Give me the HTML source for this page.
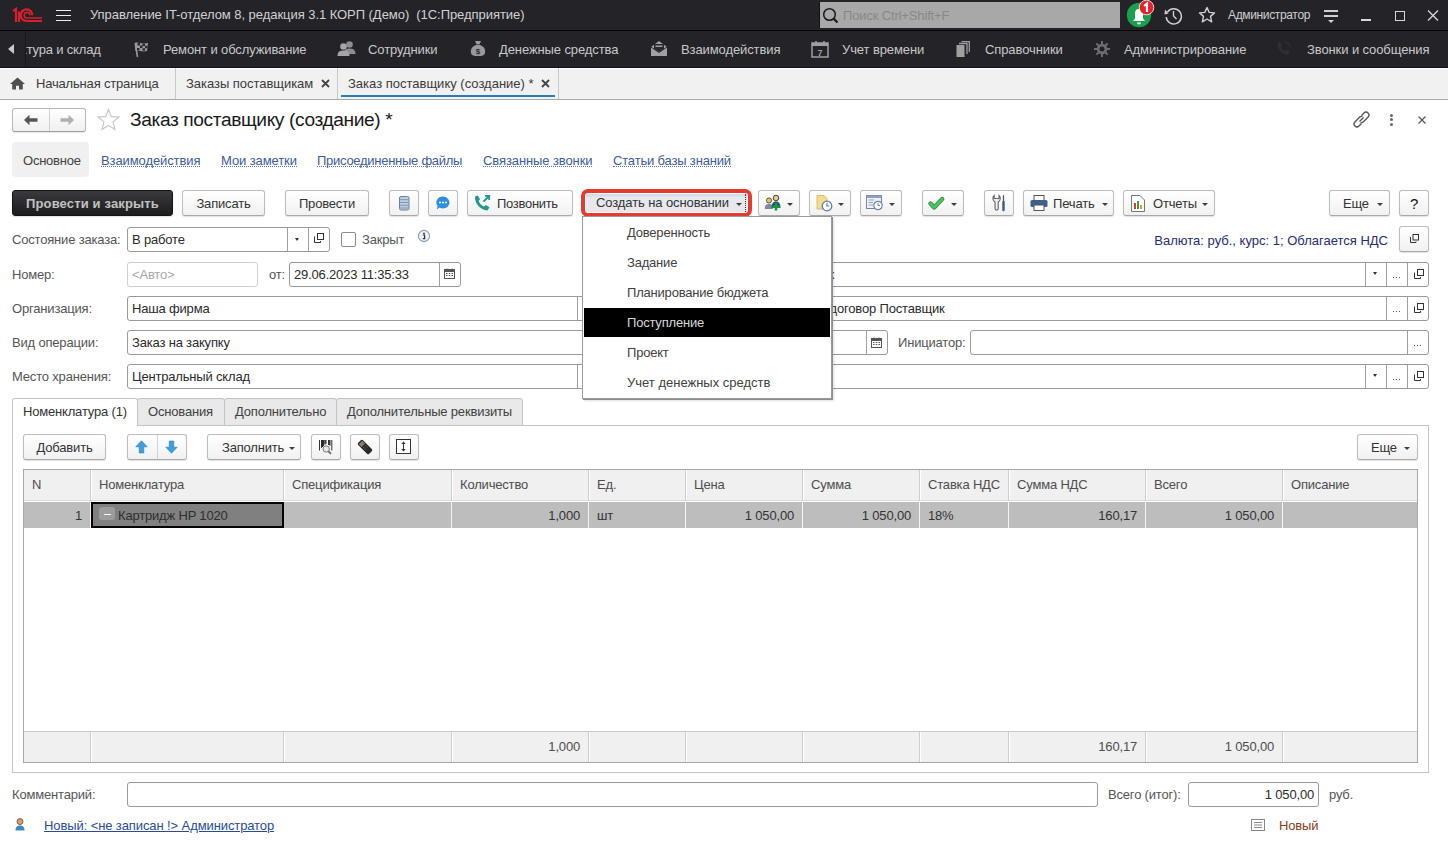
<!DOCTYPE html>
<html><head><meta charset="utf-8">
<style>
*{box-sizing:border-box}
html,body{margin:0;padding:0}
body{width:1448px;height:847px;overflow:hidden;position:relative;background:#fff;font-family:"Liberation Sans",sans-serif;font-size:13px;color:#4d4d4d;letter-spacing:-0.18px}
.a{position:absolute;white-space:nowrap}
.t{position:absolute;white-space:nowrap;line-height:16px}
/* top bars */
#tb{position:absolute;left:0;top:0;width:1448px;height:30px;background:#232328}
#tbl{position:absolute;left:0;top:30px;width:1448px;height:1px;background:#050505}
#sb{position:absolute;left:0;top:31px;width:1448px;height:37px;background:#232328;border-bottom:1px solid #111}
#tabs{position:absolute;left:0;top:68px;width:1448px;height:32px;background:#f1f1f1;border-top:1px solid #fff;border-bottom:1px solid #a8a8a8}
.wt{color:#c9c9c9}
.btn{position:absolute;height:26px;padding-top:1px;border:1px solid #bcbcbc;border-bottom-color:#a8a8a8;border-radius:3px;background:linear-gradient(#ffffff,#f1f1f1);box-shadow:0 1px 1px rgba(0,0,0,.12);color:#333;line-height:24px;text-align:center;white-space:nowrap}
.fld{position:absolute;height:24px;border:1px solid #9a9a9a;border-radius:3px;background:#fff;color:#2a2a2a;line-height:22px;padding-left:4px;padding-top:1px;white-space:nowrap;overflow:hidden}
.dv{position:absolute;top:0;bottom:0;width:1px;background:#a0a0a0}
.lbl{position:absolute;white-space:nowrap;color:#555;line-height:16px}
.dd{position:absolute;width:0;height:0;border-left:3px solid transparent;border-right:3px solid transparent;border-top:3px solid #404040}
.lnk{position:absolute;white-space:nowrap;color:#3d5a9e;line-height:16px;height:14px;border-bottom:1px dotted #5a78b8}
</style></head>
<body>
<div id="tb"></div>
<div id="tbl"></div>
<div id="sb"></div>
<div id="tabs"></div>

<!-- title bar content -->
<svg class="a" style="left:11px;top:7px" width="34" height="17" viewBox="0 0 34 17">
 <path d="M2 4 L5 2 L5 15" stroke="#d8202c" stroke-width="2.2" fill="none"/>
 <path d="M8 4.5 L8 15" stroke="#d8202c" stroke-width="2.2" fill="none"/>
 <path d="M31 14 H15.5 A5.8 5.8 0 1 1 21.3 8.2" stroke="#d8202c" stroke-width="2.2" fill="none"/>
 <path d="M31 11 H16 A2.8 2.8 0 1 1 18.8 8.2" stroke="#d8202c" stroke-width="1.6" fill="none"/>
</svg>
<div class="a" style="left:56px;top:10px;width:15px;height:1px;background:#ececec"></div>
<div class="a" style="left:56px;top:15px;width:15px;height:1px;background:#ececec"></div>
<div class="a" style="left:56px;top:20px;width:15px;height:1px;background:#ececec"></div>
<div class="t" style="left:90px;top:7px;color:#d2d2d2;letter-spacing:-0.05px">Управление IT-отделом 8, редакция 3.1 КОРП (Демо) &nbsp;(1С:Предприятие)</div>
<div class="a" style="left:819px;top:2px;width:301px;height:26px;background:#a8a8a8;border-left:1px solid #111"></div>
<svg class="a" style="left:822px;top:7px" width="18" height="18" viewBox="0 0 18 18"><circle cx="7.5" cy="7.5" r="5.8" stroke="#1a1a1a" stroke-width="1.5" fill="none"/><path d="M11.6 11.6 L15.5 15.5" stroke="#1a1a1a" stroke-width="2.2"/></svg>
<div class="t" style="left:843px;top:8px;color:#888888;font-size:13px;letter-spacing:-0.15px">Поиск Ctrl+Shift+F</div>
<!-- bell -->
<svg class="a" style="left:1125px;top:0px" width="32" height="30" viewBox="0 0 32 30">
 <circle cx="14" cy="15" r="12.2" fill="#17a14a"/>
 <path d="M8 21 L10 18.5 V13 A4 4 0 0 1 18 13 V18.5 L20 21 Z" fill="#fff"/>
 <path d="M12 22.5 A2 2 0 0 0 16 22.5 Z" fill="#fff"/>
 <circle cx="21.5" cy="7.5" r="7.3" fill="#e8202a" stroke="#fff" stroke-width="0.8"/>
 <path d="M19.2 6 L22 3.6 V12" stroke="#fff" stroke-width="2.2" fill="none"/>
</svg>
<svg class="a" style="left:1163px;top:6px" width="20" height="19" viewBox="0 0 20 19">
 <path d="M4.5 6 A7.6 7.6 0 1 1 3.2 11" stroke="#d0d0d0" stroke-width="1.5" fill="none"/>
 <path d="M2 3.5 L5.5 7.5 L1.5 8.5 Z" fill="#d0d0d0"/>
 <path d="M10.5 5 V10 L13.5 13" stroke="#d0d0d0" stroke-width="1.4" fill="none"/>
</svg>
<svg class="a" style="left:1198px;top:6px" width="18" height="18" viewBox="0 0 18 18">
 <path d="M9 1.5 L11.2 6.4 L16.5 6.9 L12.5 10.4 L13.7 15.8 L9 13 L4.3 15.8 L5.5 10.4 L1.5 6.9 L6.8 6.4 Z" stroke="#d0d0d0" stroke-width="1.4" fill="none" stroke-linejoin="round"/>
</svg>
<div class="t" style="left:1228px;top:7px;color:#d0d0d0;font-size:12px;letter-spacing:-0.35px">Администратор</div>
<div class="a" style="left:1324px;top:10px;width:14px;height:1.5px;background:#d0d0d0"></div>
<div class="a" style="left:1324px;top:15px;width:14px;height:1.5px;background:#d0d0d0"></div>
<div class="dd" style="left:1328px;top:20px;border-left-width:3px;border-right-width:3px;border-top:3px solid #d0d0d0"></div>
<div class="a" style="left:1361px;top:19px;width:10px;height:1.5px;background:#d8d8d8"></div>
<div class="a" style="left:1395px;top:11px;width:10px;height:10px;border:1.5px solid #d8d8d8"></div>
<svg class="a" style="left:1427px;top:10px" width="12" height="11" viewBox="0 0 12 11"><path d="M1 0.5 L11 10.5 M11 0.5 L1 10.5" stroke="#d8d8d8" stroke-width="1.3"/></svg>

<!-- section bar -->
<div class="a" style="left:25px;top:31px;width:1px;height:36px;background:#18181b"></div>
<div class="a" style="left:8px;top:44px;width:0;height:0;border-top:5px solid transparent;border-bottom:5px solid transparent;border-right:6px solid #c9c9c9"></div>
<div class="a" style="left:26px;top:42px;width:80px;height:18px;overflow:hidden"><div class="t wt" style="left:-5px;top:0">ктура и склад</div></div>


<!-- flag -->
<svg class="a" style="left:133px;top:41px" width="17" height="17" viewBox="0 0 17 17">
 <path d="M2 2 C5 0.5 8 3.5 15 2 L14 10 C8 11.5 5 8.5 2.5 10 Z" fill="#9a9a9a"/>
 <path d="M4.5 2 h2.5 v2.5 h-2.5z M9.5 2.5 h2.5 v2.5 h-2.5z M7 4.5 h2.5 v2.5 h-2.5z M12 4.8 h2.5 v2.5 h-2.5z M4 7 h2.5 v2.5 h-2.5z M9.5 7.2 h2.5 v2.5 h-2.5z" fill="#2a2a2e"/>
 <path d="M2.2 2 L4.5 16" stroke="#9a9a9a" stroke-width="1.6"/>
</svg>
<div class="t wt" style="left:163px;top:42px;letter-spacing:-0.12px">Ремонт и обслуживание</div>
<!-- people -->
<svg class="a" style="left:337px;top:40px" width="19" height="17" viewBox="0 0 19 17">
 <circle cx="12.5" cy="4.5" r="3.3" fill="#8e8e8e"/><path d="M7 14 C7 9.5 9.5 8.5 12.5 8.5 C15.5 8.5 18.5 9.5 18.5 14 Z" fill="#8e8e8e"/>
 <circle cx="6.5" cy="6.5" r="3.3" fill="#a5a5a5"/><path d="M0.5 16 C0.5 11.5 3 10.5 6.5 10.5 C10 10.5 12.5 11.5 12.5 16 Z" fill="#a5a5a5"/>
</svg>
<div class="t wt" style="left:368px;top:42px;letter-spacing:-0.1px">Сотрудники</div>
<!-- money bag -->
<svg class="a" style="left:470px;top:40px" width="16" height="17" viewBox="0 0 16 17">
 <path d="M5 1 H11 L9.5 4.5 H6.5 Z" fill="#999"/>
 <path d="M6 5 C1 7 0.5 10 1 13 C1.5 15.5 4 16 8 16 C12 16 14.5 15.5 15 13 C15.5 10 15 7 10 5 Z" fill="#999"/>
 <text x="8" y="13.5" font-size="8" text-anchor="middle" fill="#2a2a2e" font-family="Liberation Sans" font-weight="bold">$</text>
</svg>
<div class="t wt" style="left:499px;top:42px;letter-spacing:-0.1px">Денежные средства</div>
<!-- envelope -->
<svg class="a" style="left:650px;top:40px" width="18" height="17" viewBox="0 0 18 17">
 <path d="M1 7 L9 1 L17 7 V16 H1 Z" fill="#a0a0a0"/>
 <path d="M4 4 H14 V9 L9 12 L4 9 Z" fill="#2a2a2e"/>
 <path d="M5.5 5.5 H12.5 V7 H5.5Z" fill="#a0a0a0"/>
 <path d="M1 7 L9 12.5 L17 7" stroke="#2a2a2e" stroke-width="1" fill="none"/>
</svg>
<div class="t wt" style="left:681px;top:42px;letter-spacing:-0.1px">Взаимодействия</div>
<!-- calendar -->
<svg class="a" style="left:811px;top:40px" width="18" height="18" viewBox="0 0 18 18">
 <rect x="1" y="3" width="16" height="14" fill="none" stroke="#a0a0a0" stroke-width="1.5"/>
 <rect x="1" y="3" width="16" height="3" fill="#a0a0a0"/>
 <path d="M5 1 V4 M13 1 V4" stroke="#a0a0a0" stroke-width="1.5"/>
 <text x="9" y="15.5" font-size="9" text-anchor="middle" fill="#a0a0a0" font-family="Liberation Sans" font-weight="bold">7</text>
</svg>
<div class="t wt" style="left:842px;top:42px;letter-spacing:-0.1px">Учет времени</div>
<!-- books -->
<svg class="a" style="left:956px;top:41px" width="14" height="16" viewBox="0 0 14 16">
 <rect x="0.5" y="4" width="8" height="12" fill="#a0a0a0"/>
 <path d="M3 2.5 H11 V13" stroke="#a0a0a0" stroke-width="1.3" fill="none"/>
 <path d="M5.5 0.7 H13.3 V11" stroke="#a0a0a0" stroke-width="1.3" fill="none"/>
</svg>
<div class="t wt" style="left:985px;top:42px;letter-spacing:-0.1px">Справочники</div>
<!-- gear -->
<svg class="a" style="left:1094px;top:41px" width="16" height="16" viewBox="0 0 16 16">
 <g fill="#6e6e6e"><circle cx="8" cy="8" r="5.2"/>
 <path d="M7 0 h2 v3 h-2z M7 13 h2 v3 h-2z M0 7 h3 v2 h-3z M13 7 h3 v2 h-3z" />
 <path d="M7 0 h2 v3 h-2z M7 13 h2 v3 h-2z M0 7 h3 v2 h-3z M13 7 h3 v2 h-3z" transform="rotate(45 8 8)"/></g>
 <circle cx="8" cy="8" r="2.5" fill="#222227"/>
</svg>
<div class="t wt" style="left:1124px;top:42px;letter-spacing:-0.1px">Администрирование</div>
<svg class="a" style="left:1275px;top:40px" width="18" height="18" viewBox="0 0 18 18">
 <path d="M3 3 C2 8 6 14 13 15 L15 12 L11.5 10 L10 11.5 C8 10.5 6.5 9 5.5 7 L7 5.5 L5 2 Z" fill="#303035"/>
 <path d="M10 2 C13 2.5 15 4.5 15.5 7.5" stroke="#303035" stroke-width="1.3" fill="none"/>
</svg>
<div class="t wt" style="left:1307px;top:42px;letter-spacing:-0.1px">Звонки и сообщения</div>

<!-- open tabs -->
<svg class="a" style="left:10px;top:77px" width="15" height="13" viewBox="0 0 15 13">
 <path d="M7.5 0.5 L15 7 H12.8 V12.5 H9 V8.8 H6 V12.5 H2.2 V7 H0 Z" fill="#505050"/>
</svg>
<div class="t" style="left:36px;top:76px;color:#3a3a3a;letter-spacing:-0.18px">Начальная страница</div>
<div class="a" style="left:175px;top:68px;width:1px;height:31px;background:#c8c8c8"></div>
<div class="t" style="left:186px;top:76px;color:#3a3a3a;letter-spacing:-0.04px">Заказы поставщикам</div>
<svg class="a" style="left:321px;top:79px" width="9" height="9" viewBox="0 0 9 9"><path d="M1 1 L8 8 M8 1 L1 8" stroke="#444" stroke-width="1.8"/></svg>
<div class="a" style="left:337px;top:68px;width:1px;height:31px;background:#c8c8c8"></div>
<div class="t" style="left:348px;top:76px;color:#3a3a3a;letter-spacing:0px">Заказ поставщику (создание) *</div>
<svg class="a" style="left:541px;top:79px" width="9" height="9" viewBox="0 0 9 9"><path d="M1 1 L8 8 M8 1 L1 8" stroke="#444" stroke-width="1.8"/></svg>
<div class="a" style="left:341px;top:95px;width:214px;height:2px;background:#2b7bb5"></div>
<div class="a" style="left:558px;top:68px;width:1px;height:31px;background:#c8c8c8"></div>


<!-- form header -->
<div class="a" style="left:12px;top:108px;width:74px;height:24px;border:1px solid #b8b8b8;border-bottom-color:#a0a0a0;border-radius:3px;background:linear-gradient(#fff,#f0f0f0);box-shadow:0 1px 1px rgba(0,0,0,.1)"></div>
<div class="a" style="left:49px;top:109px;width:1px;height:22px;background:#d0d0d0"></div>
<svg class="a" style="left:23px;top:114px" width="16" height="12" viewBox="0 0 16 12"><path d="M1 6 L6.5 0.8 V4.3 H14.5 V7.7 H6.5 V11.2 Z" fill="#555"/></svg>
<svg class="a" style="left:59px;top:114px" width="16" height="12" viewBox="0 0 16 12"><path d="M15 6 L9.5 0.8 V4.3 H1.5 V7.7 H9.5 V11.2 Z" fill="#b0b0b0"/></svg>
<svg class="a" style="left:96px;top:108px" width="25" height="24" viewBox="0 0 25 24">
 <path d="M12.5 1.5 L15.3 8.6 L23 9 L17 13.9 L19 21.5 L12.5 17.3 L6 21.5 L8 13.9 L2 9 L9.7 8.6 Z" stroke="#c4c4c4" stroke-width="1.1" fill="none" stroke-linejoin="miter"/>
</svg>
<div class="t" style="left:130px;top:110px;font-size:19.2px;line-height:20px;color:#1a1a1a;letter-spacing:-0.4px">Заказ поставщику (создание) *</div>
<svg class="a" style="left:1352px;top:110px" width="19" height="19" viewBox="0 0 19 19">
 <path d="M9.5 5.5 L12 3 A2.9 2.9 0 0 1 16.1 7.1 L11.5 11.7 A2.9 2.9 0 0 1 8.6 12.5" stroke="#555" stroke-width="1.4" fill="none"/>
 <path d="M9.5 13.5 L7 16 A2.9 2.9 0 0 1 2.9 11.9 L7.5 7.3 A2.9 2.9 0 0 1 10.4 6.5" stroke="#555" stroke-width="1.4" fill="none"/>
 <path d="M7.5 11.5 L11.5 7.5" stroke="#555" stroke-width="1.4"/>
</svg>
<div class="a" style="left:1390px;top:113.5px;width:3px;height:3px;border-radius:50%;background:#666"></div>
<div class="a" style="left:1390px;top:118px;width:3px;height:3px;border-radius:50%;background:#666"></div>
<div class="a" style="left:1390px;top:122.5px;width:3px;height:3px;border-radius:50%;background:#666"></div>
<svg class="a" style="left:1417.5px;top:115.5px" width="8" height="8" viewBox="0 0 8 8"><path d="M0.5 0.5 L7.5 7.5 M7.5 0.5 L0.5 7.5" stroke="#555" stroke-width="1.2"/></svg>

<div class="a" style="left:12px;top:142px;width:77px;height:35px;border-radius:4px;background:#f0f0f0"></div>
<div class="t" style="left:23px;top:153px;color:#404040;letter-spacing:-0.23px">Основное</div>
<div class="lnk" style="left:101px;top:153px;letter-spacing:-0.1px">Взаимодействия</div>
<div class="lnk" style="left:221px;top:153px;letter-spacing:-0.1px">Мои заметки</div>
<div class="lnk" style="left:317px;top:153px;letter-spacing:-0.27px">Присоединенные файлы</div>
<div class="lnk" style="left:483px;top:153px;letter-spacing:-0.1px">Связанные звонки</div>
<div class="lnk" style="left:613px;top:153px;letter-spacing:-0.17px">Статьи базы знаний</div>

<!-- toolbar -->
<div class="btn" style="left:12px;top:190px;width:161px;background:linear-gradient(#3a3a3e,#1c1c1f);border-color:#141416;color:#c2c2c2;font-weight:bold;letter-spacing:0.15px">Провести и закрыть</div>
<div class="btn" style="left:182px;top:190px;width:83px">Записать</div>
<div class="btn" style="left:285px;top:190px;width:84px">Провести</div>
<div class="btn" style="left:389px;top:190px;width:30px"></div>
<svg class="a" style="left:399px;top:196px" width="11" height="15" viewBox="0 0 11 15">
 <rect x="0.5" y="0.5" width="9.5" height="13.5" rx="1.5" fill="#bcd0e6" stroke="#70809a"/>
 <path d="M1 3.7 H9.5 M1 6.5 H9.5 M1 9.3 H9.5 M1 12 H9.5" stroke="#7d8ca4" stroke-width="0.9"/>
</svg>
<div class="btn" style="left:428px;top:190px;width:30px"></div>
<svg class="a" style="left:435px;top:195px" width="16" height="16" viewBox="0 0 16 16">
 <path d="M8 1.5 A6.5 6 0 1 1 4.5 12.6 L1.8 14.5 L2.6 11 A6.5 6 0 0 1 8 1.5 Z" fill="#2d8fe0"/>
 <circle cx="5" cy="7.5" r="1" fill="#fff"/><circle cx="8" cy="7.5" r="1" fill="#fff"/><circle cx="11" cy="7.5" r="1" fill="#fff"/>
</svg>
<div class="btn" style="left:467px;top:190px;width:106px;text-align:left;padding-left:29px;letter-spacing:-0.3px">Позвонить</div>
<svg class="a" style="left:473px;top:194px" width="19" height="18" viewBox="0 0 19 18">
 <path d="M2 2.5 C1.5 9 7 16 14.5 16.5 L16.5 13.3 L12.8 11 L11 12.5 C8.5 11.5 6.5 9.5 5.5 7 L7 5.3 L4.8 1.5 Z" fill="#1f9a8a"/>
 <path d="M10.5 7.5 L16 2 M12 1.8 H16.2 V6" stroke="#1f9a8a" stroke-width="1.8" fill="none"/>
</svg>
<div class="a" style="left:581px;top:189px;width:171px;height:28px;border:4.5px solid #e63b2f;border-radius:7px"></div>
<div class="a" style="left:586px;top:194px;width:161px;height:18px;background:linear-gradient(#d6dde8 0,#d6dde8 2px,#e6e8ec 3px,#e8e8ea);"></div>
<div class="a" style="left:745px;top:194px;width:1px;height:18px;border-left:1px dotted #333"></div>
<div class="t" style="left:596px;top:195px;color:#333;letter-spacing:-0.1px">Создать на основании</div>
<div class="dd" style="left:736px;top:203px"></div>
<div class="btn" style="left:758px;top:190px;width:42px"></div>
<svg class="a" style="left:764px;top:194px" width="18" height="17" viewBox="0 0 18 17">
 <circle cx="5" cy="6.5" r="2.6" fill="#e3c26a" stroke="#403a20" stroke-width="0.8"/>
 <path d="M0.8 15 C0.8 11 2.5 10 5 10 C7.5 10 9 11 9 15 Z" fill="#7a8aa0"/>
 <circle cx="12" cy="4" r="2.8" fill="#e8c79a" stroke="#333" stroke-width="0.9"/>
 <path d="M7.5 14 C7.5 9 9.5 7.5 12 7.5 C14.5 7.5 16.5 9 16.5 14 Z" fill="#2e4a6e"/>
 <path d="M12 9 V16.5 M8.3 12.8 H15.7" stroke="#139a3c" stroke-width="2.6"/>
</svg>
<div class="dd" style="left:787px;top:203px"></div>
<div class="btn" style="left:809px;top:190px;width:42px"></div>
<svg class="a" style="left:816px;top:195px" width="17" height="17" viewBox="0 0 17 17">
 <path d="M1 0.5 H8 L11 3.5 V14 H1 Z" fill="#f3dc8e" stroke="#d2b45a" stroke-width="0.8"/>
 <circle cx="11" cy="11" r="4.8" fill="#fff" stroke="#5a7fb0" stroke-width="1.3"/>
 <path d="M11 8 V11 H13.3" stroke="#5a7fb0" stroke-width="1.1" fill="none"/>
</svg>
<div class="dd" style="left:838px;top:203px"></div>
<div class="btn" style="left:860px;top:190px;width:42px"></div>
<svg class="a" style="left:866px;top:195px" width="18" height="16" viewBox="0 0 18 16">
 <rect x="0.5" y="0.5" width="15" height="13" fill="#eef2f8" stroke="#6f84a6"/>
 <rect x="0.5" y="0.5" width="15" height="2.5" fill="#8fa3c2"/>
 <path d="M2.5 5 H8 M2.5 7.5 H7 M2.5 10 H7" stroke="#8fa3c2"/>
 <circle cx="12" cy="10.5" r="4.2" fill="#fff" stroke="#6f84a6" stroke-width="1.2"/>
 <path d="M12 8 V10.5 H14" stroke="#6f84a6" fill="none"/>
</svg>
<div class="dd" style="left:889px;top:203px"></div>
<div class="btn" style="left:922px;top:190px;width:42px"></div>
<svg class="a" style="left:928px;top:196px" width="17" height="15" viewBox="0 0 17 15"><path d="M2.5 7.5 L6.2 11.5 L14.2 3" stroke="#2e8a3e" stroke-width="4.2" fill="none" stroke-linecap="round" stroke-linejoin="round"/><path d="M2.5 7.5 L6.2 11.5 L14.2 3" stroke="#4cc45e" stroke-width="2.6" fill="none" stroke-linecap="round" stroke-linejoin="round"/></svg>
<div class="dd" style="left:951px;top:203px"></div>
<div class="btn" style="left:984px;top:190px;width:30px"></div>
<svg class="a" style="left:991px;top:194px" width="16" height="18" viewBox="0 0 16 18">
 <path d="M3.2 1.5 A4 4 0 0 0 4 8 V14.5 A1.6 1.6 0 0 0 7.2 14.5 V8 A4 4 0 0 0 8 1.5 V4.5 H3.2 Z" fill="#eee" stroke="#666" stroke-width="1.1"/>
 <path d="M12.5 1.2 V8" stroke="#555" stroke-width="1.2"/>
 <path d="M12.5 8 V16" stroke="#3a5a8a" stroke-width="2.4" stroke-linecap="round"/>
</svg>
<div class="btn" style="left:1023px;top:190px;width:91px;text-align:left;padding-left:29px">Печать</div>
<svg class="a" style="left:1030px;top:195px" width="18" height="16" viewBox="0 0 18 16">
 <rect x="4" y="0.5" width="10" height="5" fill="#fff" stroke="#555"/>
 <rect x="0.5" y="5" width="17" height="7" rx="1.5" fill="#3e5f8a"/>
 <rect x="4" y="10" width="10" height="5.5" fill="#fff" stroke="#555"/>
</svg>
<div class="dd" style="left:1102px;top:203px"></div>
<div class="btn" style="left:1123px;top:190px;width:92px;text-align:left;padding-left:29px">Отчеты</div>
<svg class="a" style="left:1131px;top:195px" width="14" height="17" viewBox="0 0 14 17">
 <path d="M0.5 0.5 H9 L13.5 5 V16.5 H0.5 Z" fill="#fff" stroke="#777"/>
 <rect x="3" y="8" width="2" height="6" fill="#e03a2a"/><rect x="6" y="6" width="2" height="8" fill="#38a040"/><rect x="9" y="10" width="2" height="4" fill="#e0a020"/>
</svg>
<div class="dd" style="left:1202px;top:203px"></div>
<div class="btn" style="left:1329px;top:190px;width:61px;text-align:left;padding-left:13px">Еще</div>
<div class="dd" style="left:1377px;top:203px"></div>
<div class="btn" style="left:1399px;top:190px;width:30px;color:#111;font-size:15px">?</div>


<!-- form rows -->
<div class="lbl" style="left:12px;top:232px">Состояние заказа:</div>
<div class="fld" style="left:127px;top:227px;width:203px;height:25px;">В работе<div class="dv" style="left:159px"></div><div class="dv" style="left:180px"></div></div>
<div class="dd" style="left:295px;top:238px;border-left-width:2.5px;border-right-width:2.5px;border-top:3px solid #333"></div>
<svg class="a" style="left:314px;top:233px" width="10" height="10" viewBox="0 0 10 10"><path d="M0.5 3.5 V9.5 H6.5 V8" stroke="#333" stroke-width="1" fill="none"/><rect x="3.5" y="0.5" width="6" height="6" fill="none" stroke="#333" stroke-width="1"/></svg>
<div class="a" style="left:341px;top:232px;width:15px;height:15px;border:1px solid #8c8c8c;border-radius:2px;background:#fff"></div>
<div class="lbl" style="left:362px;top:232px">Закрыт</div>
<svg class="a" style="left:417px;top:229px" width="14" height="14" viewBox="0 0 14 14"><circle cx="7" cy="7" r="5.6" fill="#eef4fb" stroke="#8a9ab0" stroke-width="1.1"/><circle cx="7" cy="4.3" r="0.9" fill="#333"/><path d="M5.8 6 H7.6 V9.6 H8.4 M5.8 9.6 H8.4" stroke="#333" stroke-width="1.2" fill="none"/></svg>
<div class="t" style="left:1150px;top:233px;color:#252b78;width:238px;text-align:right;letter-spacing:0">Валюта: руб., курс: 1; Облагается НДС</div>
<div class="btn" style="left:1399px;top:226px;width:30px;height:26px"></div>
<svg class="a" style="left:1410px;top:234px" width="9" height="9" viewBox="0 0 9 9"><path d="M0.5 3 V8.5 H6 V7.5" stroke="#333" stroke-width="1" fill="none"/><rect x="3" y="0.5" width="5.5" height="5.5" fill="none" stroke="#333" stroke-width="1"/></svg>
<div class="lbl" style="left:12px;top:267px">Номер:</div>
<div class="fld" style="left:127px;top:262px;width:131px;height:25px;border-color:#cfcfcf"><span style="color:#a8a8a8">&lt;Авто&gt;</span></div>
<div class="lbl" style="left:269px;top:267px">от:</div>
<div class="fld" style="left:289px;top:262px;width:172px;height:25px;">29.06.2023 11:35:33<div class="dv" style="left:149px"></div></div>
<svg class="a" style="left:444px;top:268px" width="11" height="11" viewBox="0 0 11 11"><rect x="0.5" y="1.5" width="10" height="9" fill="none" stroke="#555"/><rect x="0.5" y="1.5" width="10" height="2.5" fill="#555"/><path d="M3 0.5 V2 M8 0.5 V2" stroke="#555"/><path d="M2 5.5 h1.5 M4.75 5.5 h1.5 M7.5 5.5 h1.5 M2 7.5 h1.5 M4.75 7.5 h1.5 M7.5 7.5 h1.5" stroke="#555"/></svg>
<div class="fld" style="left:600px;top:262px;width:829px;height:25px;"><span style="position:absolute;left:168px">Поставщик</span><div class="dv" style="left:764px"></div><div class="dv" style="left:785px"></div><div class="dv" style="left:806px"></div></div>
<div class="dd" style="left:1373px;top:272px;border-left-width:2.5px;border-right-width:2.5px;border-top:3px solid #333"></div>
<div class="a" style="left:1393px;top:277px;width:1px;height:1px;background:#555"></div><div class="a" style="left:1396px;top:277px;width:1px;height:1px;background:#555"></div><div class="a" style="left:1399px;top:277px;width:1px;height:1px;background:#555"></div>
<svg class="a" style="left:1414px;top:269px" width="10" height="10" viewBox="0 0 10 10"><path d="M0.5 3.5 V9.5 H6.5 V8" stroke="#333" stroke-width="1" fill="none"/><rect x="3.5" y="0.5" width="6" height="6" fill="none" stroke="#333" stroke-width="1"/></svg>
<div class="lbl" style="left:12px;top:301px">Организация:</div>
<div class="fld" style="left:127px;top:296px;width:472px;height:25px;">Наша фирма<div class="dv" style="left:449px"></div></div>
<div class="fld" style="left:620px;top:296px;width:809px;height:25px;"><span style="position:absolute;left:147px">Основной договор Поставщик</span><div class="dv" style="left:765px"></div><div class="dv" style="left:786px"></div></div>
<div class="a" style="left:1393px;top:311px;width:1px;height:1px;background:#555"></div><div class="a" style="left:1396px;top:311px;width:1px;height:1px;background:#555"></div><div class="a" style="left:1399px;top:311px;width:1px;height:1px;background:#555"></div>
<svg class="a" style="left:1414px;top:303px" width="10" height="10" viewBox="0 0 10 10"><path d="M0.5 3.5 V9.5 H6.5 V8" stroke="#333" stroke-width="1" fill="none"/><rect x="3.5" y="0.5" width="6" height="6" fill="none" stroke="#333" stroke-width="1"/></svg>
<div class="lbl" style="left:12px;top:335px">Вид операции:</div>
<div class="fld" style="left:127px;top:330px;width:493px;height:25px;">Заказ на закупку</div>
<div class="fld" style="left:700px;top:330px;width:188px;height:25px;"><div class="dv" style="left:165px"></div></div>
<svg class="a" style="left:871px;top:337px" width="11" height="11" viewBox="0 0 11 11"><rect x="0.5" y="1.5" width="10" height="9" fill="none" stroke="#555"/><rect x="0.5" y="1.5" width="10" height="2.5" fill="#555"/><path d="M3 0.5 V2 M8 0.5 V2" stroke="#555"/><path d="M2 5.5 h1.5 M4.75 5.5 h1.5 M7.5 5.5 h1.5 M2 7.5 h1.5 M4.75 7.5 h1.5 M7.5 7.5 h1.5" stroke="#555"/></svg>
<div class="lbl" style="left:898px;top:335px">Инициатор:</div>
<div class="fld" style="left:970px;top:330px;width:459px;height:25px;"><div class="dv" style="left:436px"></div></div>
<div class="a" style="left:1414px;top:345px;width:1px;height:1px;background:#555"></div><div class="a" style="left:1417px;top:345px;width:1px;height:1px;background:#555"></div><div class="a" style="left:1420px;top:345px;width:1px;height:1px;background:#555"></div>
<div class="lbl" style="left:12px;top:369px">Место хранения:</div>
<div class="fld" style="left:127px;top:364px;width:472px;height:25px;">Центральный склад<div class="dv" style="left:449px"></div></div>
<div class="fld" style="left:620px;top:364px;width:809px;height:25px;"><div class="dv" style="left:744px"></div><div class="dv" style="left:765px"></div><div class="dv" style="left:786px"></div></div>
<div class="dd" style="left:1373px;top:374px;border-left-width:2.5px;border-right-width:2.5px;border-top:3px solid #333"></div>
<div class="a" style="left:1393px;top:379px;width:1px;height:1px;background:#555"></div><div class="a" style="left:1396px;top:379px;width:1px;height:1px;background:#555"></div><div class="a" style="left:1399px;top:379px;width:1px;height:1px;background:#555"></div>
<svg class="a" style="left:1414px;top:371px" width="10" height="10" viewBox="0 0 10 10"><path d="M0.5 3.5 V9.5 H6.5 V8" stroke="#333" stroke-width="1" fill="none"/><rect x="3.5" y="0.5" width="6" height="6" fill="none" stroke="#333" stroke-width="1"/></svg>
<!-- /form rows -->
<!-- table section -->
<div class="a" style="left:12px;top:425px;width:1417px;height:348px;border:1px solid #c4c4c4;background:#fff"></div>
<div class="a" style="left:12px;top:398px;width:126px;height:28px;border:1px solid #c4c4c4;border-bottom:none;border-radius:3px 3px 0 0;background:#fff;z-index:2"></div>
<div class="t" style="left:23px;top:404px;color:#333;z-index:3">Номенклатура (1)</div>
<div class="a" style="left:137px;top:398px;width:88px;height:28px;border:1px solid #c4c4c4;border-radius:3px 3px 0 0;background:#e9e9e9"></div>
<div class="t" style="left:148px;top:404px;color:#404040">Основания</div>
<div class="a" style="left:224px;top:398px;width:113px;height:28px;border:1px solid #c4c4c4;border-radius:3px 3px 0 0;background:#e9e9e9"></div>
<div class="t" style="left:235px;top:404px;color:#404040">Дополнительно</div>
<div class="a" style="left:336px;top:398px;width:187px;height:28px;border:1px solid #c4c4c4;border-radius:3px 3px 0 0;background:#e9e9e9"></div>
<div class="t" style="left:347px;top:404px;color:#404040">Дополнительные реквизиты</div>
<div class="btn" style="left:23px;top:434px;width:83px;height:26px">Добавить</div>
<div class="btn" style="left:127px;top:434px;width:60px;height:26px"></div>
<div class="a" style="left:157px;top:435px;width:1px;height:24px;background:#d4d4d4"></div>
<svg class="a" style="left:135px;top:440px" width="13" height="14" viewBox="0 0 13 14"><path d="M6.5 0.8 L12.2 6.8 H8.8 V13 H4.2 V6.8 H0.8 Z" fill="#3d9ee0" stroke="#2a7fc0" stroke-width="0.6"/></svg>
<svg class="a" style="left:165px;top:440px" width="13" height="14" viewBox="0 0 13 14"><path d="M6.5 13.2 L12.2 7.2 H8.8 V1 H4.2 V7.2 H0.8 Z" fill="#3d9ee0" stroke="#2a7fc0" stroke-width="0.6"/></svg>
<div class="btn" style="left:207px;top:434px;width:94px;height:26px;text-align:left;padding-left:14px">Заполнить</div>
<div class="dd" style="left:289px;top:447px"></div>
<div class="btn" style="left:311px;top:434px;width:30px;height:26px"></div>
<svg class="a" style="left:318px;top:439px" width="16" height="17" viewBox="0 0 16 17"><path d="M1.5 1 V11.5 M3.5 1 V9 M5.5 1 V7 M8 1 V5 M10.5 1 V6 M13.8 1 V11.5" stroke="#1a1a1a" stroke-width="0.9"/><path d="M4.3 1 V8 M7 1 V5.5 M11.8 1 V6.5" stroke="#1a1a1a" stroke-width="1.3"/><circle cx="8.2" cy="10" r="3.2" fill="#e6e6e6" stroke="#777" stroke-width="1"/><path d="M10.5 12.3 L13 14.8" stroke="#666" stroke-width="1.8"/></svg>
<div class="btn" style="left:350px;top:434px;width:30px;height:26px"></div>
<svg class="a" style="left:357px;top:439px" width="16" height="16" viewBox="0 0 16 16"><g transform="rotate(-45 8 8)"><rect x="4.6" y="0.2" width="6.8" height="15.6" rx="1.6" fill="#2a2a2a"/><rect x="5.6" y="1.6" width="4.8" height="4" fill="#8c7d62"/><path d="M6 7.5 h1.2 M8.8 7.5 h1.2 M6 9.5 h1.2 M8.8 9.5 h1.2" stroke="#6a6050" stroke-width="1"/></g></svg>
<div class="btn" style="left:389px;top:434px;width:30px;height:26px"></div>
<svg class="a" style="left:396px;top:439px" width="16" height="16" viewBox="0 0 16 16"><rect x="0.5" y="0.5" width="14" height="14" fill="#fff" stroke="#333"/><path d="M7.5 3 V12" stroke="#333" stroke-width="1"/><path d="M5.3 5 L7.5 2.5 L9.7 5 Z M5.3 10 L7.5 12.5 L9.7 10 Z" fill="#333"/></svg>
<div class="btn" style="left:1357px;top:434px;width:61px;height:26px;text-align:left;padding-left:13px">Еще</div>
<div class="dd" style="left:1404px;top:447px"></div>
<div class="a" style="left:23px;top:469px;width:1395px;height:294px;border:1px solid #a8a8a8;background:#fff"></div>
<div class="a" style="left:24px;top:470px;width:1393px;height:31px;background:#f0f0f0;border-bottom:1px solid #dadada"></div>
<div class="t" style="left:32px;top:477px;color:#4d4d4d">N</div>
<div class="a" style="left:90px;top:470px;width:1px;height:30px;background:#cdcdcd;border-right:1px solid #fff;width:2px"></div>
<div class="t" style="left:99px;top:477px;color:#4d4d4d">Номенклатура</div>
<div class="a" style="left:283px;top:470px;width:1px;height:30px;background:#cdcdcd;border-right:1px solid #fff;width:2px"></div>
<div class="t" style="left:292px;top:477px;color:#4d4d4d">Спецификация</div>
<div class="a" style="left:451px;top:470px;width:1px;height:30px;background:#cdcdcd;border-right:1px solid #fff;width:2px"></div>
<div class="t" style="left:460px;top:477px;color:#4d4d4d">Количество</div>
<div class="a" style="left:588px;top:470px;width:1px;height:30px;background:#cdcdcd;border-right:1px solid #fff;width:2px"></div>
<div class="t" style="left:597px;top:477px;color:#4d4d4d">Ед.</div>
<div class="a" style="left:685px;top:470px;width:1px;height:30px;background:#cdcdcd;border-right:1px solid #fff;width:2px"></div>
<div class="t" style="left:694px;top:477px;color:#4d4d4d">Цена</div>
<div class="a" style="left:802px;top:470px;width:1px;height:30px;background:#cdcdcd;border-right:1px solid #fff;width:2px"></div>
<div class="t" style="left:811px;top:477px;color:#4d4d4d">Сумма</div>
<div class="a" style="left:919px;top:470px;width:1px;height:30px;background:#cdcdcd;border-right:1px solid #fff;width:2px"></div>
<div class="t" style="left:928px;top:477px;color:#4d4d4d">Ставка НДС</div>
<div class="a" style="left:1008px;top:470px;width:1px;height:30px;background:#cdcdcd;border-right:1px solid #fff;width:2px"></div>
<div class="t" style="left:1017px;top:477px;color:#4d4d4d">Сумма НДС</div>
<div class="a" style="left:1145px;top:470px;width:1px;height:30px;background:#cdcdcd;border-right:1px solid #fff;width:2px"></div>
<div class="t" style="left:1154px;top:477px;color:#4d4d4d">Всего</div>
<div class="a" style="left:1282px;top:470px;width:1px;height:30px;background:#cdcdcd;border-right:1px solid #fff;width:2px"></div>
<div class="t" style="left:1291px;top:477px;color:#4d4d4d">Описание</div>
<div class="a" style="left:24px;top:502px;width:1393px;height:26px;background:#bdbdbd"></div>
<div class="a" style="left:90px;top:502px;width:1px;height:26px;background:#f4f4f4"></div>
<div class="a" style="left:283px;top:502px;width:1px;height:26px;background:#f4f4f4"></div>
<div class="a" style="left:451px;top:502px;width:1px;height:26px;background:#f4f4f4"></div>
<div class="a" style="left:588px;top:502px;width:1px;height:26px;background:#f4f4f4"></div>
<div class="a" style="left:685px;top:502px;width:1px;height:26px;background:#f4f4f4"></div>
<div class="a" style="left:802px;top:502px;width:1px;height:26px;background:#f4f4f4"></div>
<div class="a" style="left:919px;top:502px;width:1px;height:26px;background:#f4f4f4"></div>
<div class="a" style="left:1008px;top:502px;width:1px;height:26px;background:#f4f4f4"></div>
<div class="a" style="left:1145px;top:502px;width:1px;height:26px;background:#f4f4f4"></div>
<div class="a" style="left:1282px;top:502px;width:1px;height:26px;background:#f4f4f4"></div>
<div class="a" style="left:91px;top:502px;width:193px;height:26px;background:#808080;border:2px solid #050505"></div>
<div class="a" style="left:99px;top:507px;width:16px;height:13px;border-radius:3px;background:#9c9c9c"></div><div class="a" style="left:104px;top:513.5px;width:7px;height:1.6px;background:#f8f8f8"></div>
<div class="t" style="left:23px;width:59px;text-align:right;top:508px;color:#333">1</div>
<div class="t" style="left:118px;top:508px;color:#2e2e2e">Картридж HP 1020</div>
<div class="t" style="left:451px;width:129px;text-align:right;top:508px;color:#333">1,000</div>
<div class="t" style="left:597px;top:508px;color:#333">шт</div>
<div class="t" style="left:685px;width:109px;text-align:right;top:508px;color:#333">1 050,00</div>
<div class="t" style="left:802px;width:109px;text-align:right;top:508px;color:#333">1 050,00</div>
<div class="t" style="left:928px;top:508px;color:#333">18%</div>
<div class="t" style="left:1008px;width:129px;text-align:right;top:508px;color:#333">160,17</div>
<div class="t" style="left:1145px;width:129px;text-align:right;top:508px;color:#333">1 050,00</div>
<div class="a" style="left:24px;top:731px;width:1393px;height:31px;background:#f0f0f0;border-top:1px solid #c8c8c8"></div>
<div class="a" style="left:90px;top:732px;width:2px;height:30px;background:#cdcdcd;border-right:1px solid #fff"></div>
<div class="a" style="left:283px;top:732px;width:2px;height:30px;background:#cdcdcd;border-right:1px solid #fff"></div>
<div class="a" style="left:451px;top:732px;width:2px;height:30px;background:#cdcdcd;border-right:1px solid #fff"></div>
<div class="a" style="left:588px;top:732px;width:2px;height:30px;background:#cdcdcd;border-right:1px solid #fff"></div>
<div class="a" style="left:685px;top:732px;width:2px;height:30px;background:#cdcdcd;border-right:1px solid #fff"></div>
<div class="a" style="left:802px;top:732px;width:2px;height:30px;background:#cdcdcd;border-right:1px solid #fff"></div>
<div class="a" style="left:919px;top:732px;width:2px;height:30px;background:#cdcdcd;border-right:1px solid #fff"></div>
<div class="a" style="left:1008px;top:732px;width:2px;height:30px;background:#cdcdcd;border-right:1px solid #fff"></div>
<div class="a" style="left:1145px;top:732px;width:2px;height:30px;background:#cdcdcd;border-right:1px solid #fff"></div>
<div class="a" style="left:1282px;top:732px;width:2px;height:30px;background:#cdcdcd;border-right:1px solid #fff"></div>
<div class="t" style="left:451px;width:129px;text-align:right;top:739px;color:#4d4d4d">1,000</div>
<div class="t" style="left:1008px;width:129px;text-align:right;top:739px;color:#4d4d4d">160,17</div>
<div class="t" style="left:1145px;width:129px;text-align:right;top:739px;color:#4d4d4d">1 050,00</div>
<!-- /table section -->
<!-- bottom+menu -->
<div class="lbl" style="left:12px;top:787px">Комментарий:</div>
<div class="fld" style="left:127px;top:782px;width:971px;height:25px"></div>
<div class="lbl" style="left:1108px;top:787px">Всего (итог):</div>
<div class="fld" style="left:1188px;top:782px;width:131px;height:25px;text-align:right;padding-right:4px">1 050,00</div>
<div class="lbl" style="left:1329px;top:787px">руб.</div>
<svg class="a" style="left:15px;top:818px" width="10" height="13" viewBox="0 0 10 13"><circle cx="5" cy="3.6" r="3" fill="#d8a070" stroke="#6a4a30" stroke-width="0.8"/><path d="M0.5 12.5 C0.5 8.5 2.5 7.5 5 7.5 C7.5 7.5 9.5 8.5 9.5 12.5 Z" fill="#3a8ac8"/></svg>
<div class="t" style="left:44px;top:818px;color:#2a4a9a;text-decoration:underline;letter-spacing:-0.1px">Новый: &lt;не записан !&gt; Администратор</div>
<svg class="a" style="left:1251px;top:819px" width="15" height="13" viewBox="0 0 15 13"><rect x="0.5" y="0.5" width="13" height="11" fill="#fff" stroke="#888"/><path d="M3 3.5 H11 M3 6 H11 M3 8.5 H11" stroke="#888"/></svg>
<div class="t" style="left:1279px;top:818px;color:#8a3a1a">Новый</div>
<div class="a" style="left:582px;top:216px;width:250px;height:183px;background:#fff;border:1px solid #9a9a9a;box-shadow:1px 1px 0 #8e8e8e,2px 2px 2px rgba(0,0,0,.12);z-index:10"></div>
<div class="a" style="left:584px;top:308px;width:246px;height:29px;background:#000;z-index:11"></div>
<div class="t" style="left:627px;top:225px;color:#404040;z-index:12;letter-spacing:-0.2px">Доверенность</div>
<div class="t" style="left:627px;top:255px;color:#404040;z-index:12;letter-spacing:-0.2px">Задание</div>
<div class="t" style="left:627px;top:285px;color:#404040;z-index:12;letter-spacing:-0.2px">Планирование бюджета</div>
<div class="t" style="left:627px;top:315px;color:#d8d8d8;z-index:12;letter-spacing:-0.2px">Поступление</div>
<div class="t" style="left:627px;top:345px;color:#404040;z-index:12;letter-spacing:-0.2px">Проект</div>
<div class="t" style="left:627px;top:375px;color:#404040;z-index:12;letter-spacing:0">Учет денежных средств</div>
<!-- /bottom+menu --></body></html>
